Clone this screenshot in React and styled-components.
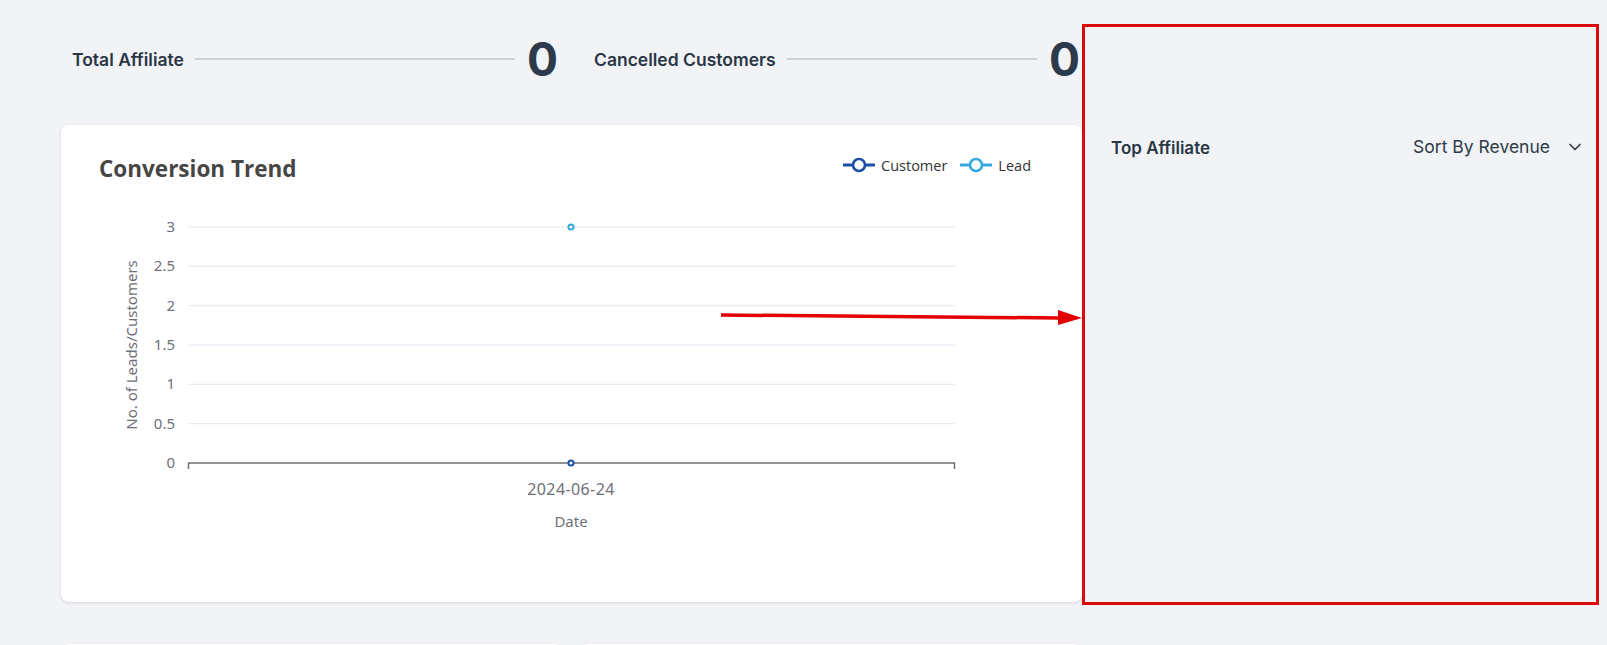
import React from "react";
import styled, { createGlobalStyle } from "styled-components";
import { ChevronDown } from "lucide-react";

const GlobalStyle = createGlobalStyle`
  html, body {
    margin: 0;
    padding: 0;
    background: #f1f3f7;
    font-family: Inter, "Liberation Sans", sans-serif;
    overflow: hidden;
  }
  * { box-sizing: border-box; }
`;

const Page = styled.div`
  position: relative;
  display: flex;
  width: 1607px;
  height: 645px;
  overflow: hidden;
`;

const LeftColumn = styled.div`
  width: 1082px;
  flex-shrink: 0;
  padding-left: 61px;
  overflow: hidden;
`;

const StatRow = styled.div`
  display: grid;
  grid-template-columns: 1fr 1fr;
  column-gap: 36px;
  padding: 34px 2px 0 11px;
  height: 125px;
`;

const Stat = styled.div`
  display: flex;
  align-items: center;
  height: 50px;
`;

const StatLabel = styled.span`
  font-size: 17.5px;
  font-weight: 600;
  color: #2b3645;
  white-space: nowrap;
`;

const StatLine = styled.div`
  flex: 1;
  height: 2px;
  background: #cdd1d8;
  margin: 0 12px 0 11px;
`;

const StatValue = styled.span`
  font-size: 46px;
  font-weight: 700;
  line-height: 50px;
  color: #2c3a4b;
`;

const Card = styled.div`
  background: #fff;
  border-radius: 8px;
  box-shadow: 0 1px 3px rgba(0, 0, 0, 0.13);
  height: ${(p) => p.$height}px;
`;

const CardHeader = styled.div`
  display: flex;
  justify-content: space-between;
  align-items: flex-start;
  height: 70px;
  padding: 29px 51px 0 38px;
`;

const CardTitle = styled.h2`
  margin: 0;
  font-family: "Open Sans", "Noto Sans", sans-serif;
  font-size: 22.5px;
  line-height: 30px;
  font-weight: 700;
  color: #464646;
`;

const Legend = styled.div`
  display: flex;
  align-items: center;
  gap: 13px;
  height: 20px;
  margin-top: 1px;
`;

const LegendItem = styled.div`
  display: flex;
  align-items: center;
  gap: 6px;
  font-family: "Open Sans", "Noto Sans", sans-serif;
  font-size: 14.5px;
  color: #333;
`;

const BottomRow = styled.div`
  display: grid;
  grid-template-columns: 1fr 1fr;
  column-gap: 17px;
  margin-top: 42px;
`;

const RightPanel = styled.div`
  width: 517px;
  height: 581px;
  margin-top: 24px;
  border: 3px solid #dc0b0b;
  padding: 108px 11px 0 26px;
`;

const PanelHeader = styled.div`
  display: flex;
  align-items: center;
  justify-content: space-between;
  height: 26px;
`;

const PanelTitle = styled.span`
  font-size: 17px;
  font-weight: 600;
  color: #2b3645;
`;

const SortButton = styled.div`
  display: flex;
  align-items: center;
  gap: 15px;
  font-size: 17.5px;
  color: #2f3a48;
  margin-top: -3px;
`;

const ArrowOverlay = styled.svg`
  position: absolute;
  left: 0;
  top: 0;
  pointer-events: none;
`;

function LegendMark({ color }) {
  return (
    <svg width="32" height="16" viewBox="0 0 32 16">
      <line x1="0" y1="8" x2="32" y2="8" stroke={color} strokeWidth="3" />
      <circle cx="16" cy="8" r="6" fill="#fff" stroke={color} strokeWidth="2.6" />
    </svg>
  );
}

const gridYs = [32, 71.3, 110.7, 150, 189.3, 228.7];
const yLabels = ["3", "2.5", "2", "1.5", "1", "0.5"];

const labelStyle = {
  fontFamily: '"Noto Sans", "Open Sans", sans-serif',
  fontSize: 15,
  fill: "#6e7079",
};

function TrendChart() {
  return (
    <svg width="1021" height="407" viewBox="0 0 1021 407">
      {gridYs.map((y, i) => (
        <g key={y}>
          <line x1="127" y1={y} x2="894" y2={y} stroke="#e0e6f1" strokeWidth="1" />
          <text x="114" y={y + 5} textAnchor="end" style={labelStyle}>
            {yLabels[i]}
          </text>
        </g>
      ))}
      <text x="114" y="273" textAnchor="end" style={labelStyle}>
        0
      </text>
      <line x1="127" y1="268" x2="894" y2="268" stroke="#6e7079" strokeWidth="1.5" />
      <line x1="127.5" y1="268" x2="127.5" y2="274" stroke="#6e7079" strokeWidth="1.5" />
      <line x1="893.5" y1="268" x2="893.5" y2="274" stroke="#6e7079" strokeWidth="1.5" />
      <text
        x="76"
        y="150"
        textAnchor="middle"
        transform="rotate(-90 76 150)"
        style={labelStyle}
      >
        No. of Leads/Customers
      </text>
      <text
        x="510"
        y="300"
        textAnchor="middle"
        style={{ ...labelStyle, fontSize: 16, letterSpacing: 0.4 }}
      >
        2024-06-24
      </text>
      <text x="510" y="332" textAnchor="middle" style={labelStyle}>
        Date
      </text>
      <circle cx="510" cy="32" r="2.6" fill="#fff" stroke="#38a8df" strokeWidth="2" />
      <circle cx="510" cy="268" r="2.6" fill="#fff" stroke="#1b4fa6" strokeWidth="2" />
    </svg>
  );
}

export default function App() {
  return (
    <>
      <GlobalStyle />
      <Page>
        <LeftColumn>
          <StatRow>
            <Stat>
              <StatLabel>Total Affiliate</StatLabel>
              <StatLine />
              <StatValue>0</StatValue>
            </Stat>
            <Stat>
              <StatLabel>Cancelled Customers</StatLabel>
              <StatLine />
              <StatValue>0</StatValue>
            </Stat>
          </StatRow>
          <Card $height={477}>
            <CardHeader>
              <CardTitle>Conversion Trend</CardTitle>
              <Legend>
                <LegendItem>
                  <LegendMark color="#1b4fa6" />
                  Customer
                </LegendItem>
                <LegendItem>
                  <LegendMark color="#38a8df" />
                  Lead
                </LegendItem>
              </Legend>
            </CardHeader>
            <TrendChart />
          </Card>
          <BottomRow>
            <Card $height={300} />
            <Card $height={300} />
          </BottomRow>
        </LeftColumn>
        <RightPanel>
          <PanelHeader>
            <PanelTitle>Top Affiliate</PanelTitle>
            <SortButton>
              Sort By Revenue
              <ChevronDown size={20} strokeWidth={2} color="#2f3a48" />
            </SortButton>
          </PanelHeader>
        </RightPanel>
        <ArrowOverlay width="1607" height="645">
          <path d="M721 315 L1060 318" stroke="#e30000" strokeWidth="3.5" fill="none" />
          <polygon points="1058,310 1082,318 1058,325" fill="#e30000" />
        </ArrowOverlay>
      </Page>
    </>
  );
}
